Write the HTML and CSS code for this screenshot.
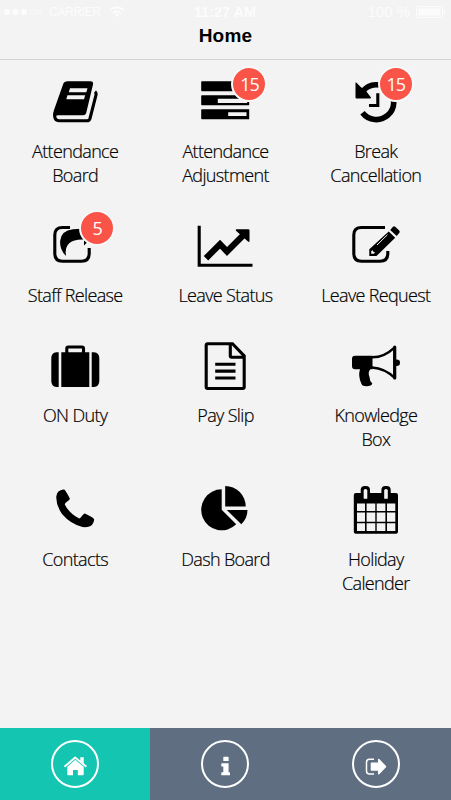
FILE: index.html
```
<!DOCTYPE html>
<html lang="en">
  <head>
    <meta charset="UTF-8" />
    <meta name="viewport" content="width=device-width, initial-scale=1.0" />
    <title>Home</title>
    <link rel="stylesheet" href="styles.css">
  </head>
  <body>
    <header class="header">
      <div class="status-bar">
        <div class="carrier">
          <svg width="38" height="10" viewBox="0 0 38 10">
            <circle cx="4" cy="5" r="3" fill="currentColor" />
            <circle cx="12.5" cy="5" r="3" fill="currentColor" />
            <circle cx="21" cy="5" r="3" fill="currentColor" />
            <circle cx="29.5" cy="5" r="2.5" fill="none" stroke="currentColor" stroke-width="0.5" />
            <circle cx="36" cy="5" r="1.7" fill="none" stroke="currentColor" stroke-width="0.5" />
          </svg>
          <span class="carrier-name">CARRIER</span>
          <svg width="16" height="12" viewBox="0 0 16 12" fill="none" stroke="currentColor" stroke-width="2">
            <path d="M1 4Q8-1 15 4M4 7Q8 4 12 7" />
            <circle cx="8" cy="9" r="0.8" />
          </svg>
        </div>
        <span class="time">11:27 AM</span>
        <div class="battery">
          <span>100 %</span>
          <svg width="31" height="12" viewBox="0 0 31 12">
            <rect x="0.5" y="0.5" width="26" height="11" rx="1.5" fill="none" stroke="currentColor" />
            <rect x="2.5" y="2.5" width="22" height="7" fill="currentColor" />
            <path d="M28.5 4v4" stroke="currentColor" stroke-width="1.5" />
          </svg>
        </div>
      </div>
      <h1>Home</h1>
    </header>

    <main class="menu">
      <a class="tile">
        <div class="icon">
          <svg viewBox="0 0 60 60">
            <path fill-rule="evenodd" d="M22.5 10.3H45.5Q48.6 10.4 48 13.5L41.2 42Q40.6 44.3 38 44.3H13Q10.5 44.3 10 46L8.3 44.5Q8 42 9 39L18.2 13Q19.2 10.3 22.5 10.3ZM25 17.3L23.8 21.3H41.3L42.5 17.3ZM22.5 24.2L21.3 28.2H39L40.2 24.2Z" />
            <path class="line" d="M9.8 42Q8.8 49.8 14 49.8H42Q44.3 49.8 45 47.5L50.9 24.5Q51.5 21.8 50 20.6" />
          </svg>
        </div>
        <span class="label">Attendance<br>Board</span>
      </a>
      <a class="tile">
        <div class="icon">
          <svg viewBox="0 0 60 60">
            <path fill-rule="evenodd" d="M7 10.3H54.2V20.3H7Q6.2 20.3 6.2 19.5V11Q6.2 10.3 7 10.3ZM7 24.3H54.2V34.3H7Q6.2 34.3 6.2 33.5V25Q6.2 24.3 7 24.3ZM7 38.3H54.2V48.3H7Q6.2 48.3 6.2 47.5V39Q6.2 38.3 7 38.3ZM22.8 27.7V32H52.2V27.7ZM33.2 41.3V45H51.5V41.3Z" />
          </svg>
          <span class="badge">15</span>
        </div>
        <span class="label">Attendance<br>Adjustment</span>
      </a>
      <a class="tile">
        <div class="icon icon-history">
          <svg viewBox="0 0 60 60">
            <path d="M16.5 41.7A17.4 17.4 0 1 0 17 20" fill="none" stroke="#000" stroke-width="5.6" />
            <path d="M10.2 11.5L14.5 15.8L20 20L25 26.5Q25 27.5 24 27.5H10.5Q9.5 27.5 9.5 26.5V12Q9.7 11 10.2 11.5Z" />
            <path class="line" d="M31.8 22.3V34.5H23" />
          </svg>
          <span class="badge">15</span>
        </div>
        <span class="label">Break<br>Cancellation</span>
      </a>

      <a class="tile">
        <div class="icon icon-release">
          <svg viewBox="0 0 60 60">
            <path class="line" d="M25 12.5H17.5Q9.8 12.5 9.8 20V38.5Q9.8 46.2 17.5 46.2H36.5Q44.2 46.2 44.2 38.5V33" />
            <path d="M21 41Q14.5 34.5 15.1 26Q16 15.5 28 14.2Q33 13.6 39 13.8V8L50 19.5L39 30.5V24.5Q29 24 24.5 28Q19.5 32 21 41Z" />
          </svg>
          <span class="badge">5</span>
        </div>
        <span class="label">Staff Release</span>
      </a>
      <a class="tile">
        <div class="icon">
          <svg viewBox="0 0 60 60">
            <path class="line" d="M4.2 10.7V50.2H57.5" />
            <path d="M11 43.2L25 29.2L32 36.5L49.5 19" fill="none" stroke="#000" stroke-width="6.2" />
            <path d="M41.5 14.3H53.5Q54.5 14.3 54.5 15.3V26Q54.3 27.7 53 26.5L41 15.8Q40.2 14.5 41.5 14.3Z" />
          </svg>
        </div>
        <span class="label">Leave Status</span>
      </a>
      <a class="tile">
        <div class="icon">
          <svg viewBox="0 0 60 60">
            <path class="line" d="M39 12.5H15.5Q7.8 12.5 7.8 20V38.5Q7.8 46.2 15.5 46.2H34Q41.8 46.2 41.8 38.5V36" />
            <path fill-rule="evenodd" d="M42.7 16.4L49.2 22.8L30.5 41H23.3V34.3ZM26.3 35L25.2 36.5V38.8H27.8L29.1 37.4L27.4 36.8Z" />
            <path d="M44.2 14.9L47 11.7Q48 10.8 49.2 11.7L53.2 15.4Q54.3 16.6 53.4 17.7L50.7 21.1Z" />
            <path d="M31 30L41.4 19.8" stroke="#f3f3f3" stroke-width="1" />
          </svg>
        </div>
        <span class="label">Leave Request</span>
      </a>

      <a class="tile">
        <div class="icon">
          <svg viewBox="0 0 60 60">
            <path d="M13.7 17.3V52H11.5Q6.3 51.5 6.3 46V23Q6.3 17.8 11.5 17.3ZM16.3 17.3H44.3V52H16.3ZM46.7 17.3H49Q54.3 17.8 54.3 23V46Q54.3 51.5 49 52H46.7Z" />
            <path class="line" d="M21.8 18V13.5Q21.8 12 23.3 12H37Q38.5 12 38.5 13.5V18" />
          </svg>
        </div>
        <span class="label">ON Duty</span>
      </a>
      <a class="tile">
        <div class="icon">
          <svg viewBox="0 0 60 60">
            <path class="line" d="M37.5 8.7H12.7Q11.2 8.7 11.2 10.2V52Q11.2 53.5 12.7 53.5H47.7Q49.2 53.5 49.2 52V20.8ZM35.3 9V20.8Q35.3 22.3 36.8 22.3H49M20.2 29.3H40.5M20.2 36.1H40.5M20.2 43H40.5" />
          </svg>
        </div>
        <span class="label">Pay Slip</span>
      </a>
      <a class="tile">
        <div class="icon">
          <svg viewBox="0 0 60 60">
            <path d="M9 20.7H26.5V34.2H24.5Q21.5 37 23.5 42Q23.5 46 26.3 48.5Q25.5 51.3 20.5 51.2Q16.3 51.2 15.5 49Q11.8 41 14 34.2H9Q6 34.2 6 31V24Q6 20.7 9 20.7Z" />
            <path d="M26 22.3Q38 22.5 48.7 12.3V43Q39 33.3 26 32.5" fill="none" stroke="#000" stroke-width="2.4" stroke-linejoin="round" />
            <path d="M48.7 12V43" stroke="#000" stroke-width="3.2" stroke-linecap="round" />
            <circle cx="50.7" cy="27.7" r="3.3" />
          </svg>
        </div>
        <span class="label">Knowledge<br>Box</span>
      </a>

      <a class="tile">
        <div class="icon">
          <svg viewBox="0 0 60 60">
            <path d="M13.7 12.2Q17.5 10 19.2 10.6Q20.4 11 24.8 19.6Q25 20.7 22.2 22.6Q19.4 24.3 19.9 25.7Q24.5 34.5 33.8 39.3Q35.2 39.8 36.9 37Q38.8 34.2 39.9 34.5Q48.8 38.9 49 40.2Q49.5 42 47.3 45.5Q44.5 48.7 37.5 48Q25.5 45 17 35Q10.8 25.8 11.3 17.5Q11.8 13.4 13.7 12.2Z" />
          </svg>
        </div>
        <span class="label">Contacts</span>
      </a>
      <a class="tile">
        <div class="icon">
          <svg viewBox="0 0 60 60">
            <path d="M26.7 10.3V30.8L41.2 45.3A20.5 20.5 0 1 1 26.7 10.3Z" />
            <path d="M30.2 7A20.5 20.5 0 0 1 50.7 27.6H30.2Z" />
            <path d="M31.8 31H52.5A20.5 20.5 0 0 1 46.3 45.3Z" />
          </svg>
        </div>
        <span class="label">Dash Board</span>
      </a>
      <a class="tile">
        <div class="icon">
          <svg viewBox="0 0 60 60">
            <rect x="7.8" y="14" width="44.2" height="40.7" rx="2" />
            <rect x="14.7" y="7" width="9.3" height="15" rx="4" />
            <rect x="35.4" y="7" width="9.3" height="15" rx="4" />
            <path class="cells" d="M17.7 11Q19.5 8.8 21.3 11V19.8H17.7ZM38.2 11Q40 8.8 41.8 11V19.8H38.2ZM11 24.5h8v7.6h-8zM20.6 24.5h8.7v7.6h-8.7zM30.7 24.5h8.7v7.6h-8.7zM41 24.5h8.3v7.6h-8.3zM11 33.4h8v9.3h-8zM20.6 33.4h8.7v9.3h-8.7zM30.7 33.4h8.7v9.3h-8.7zM41 33.4h8.3v9.3h-8.3zM11 44.2h8v7.8h-8zM20.6 44.2h8.7v7.8h-8.7zM30.7 44.2h8.7v7.8h-8.7zM41 44.2h8.3v7.8h-8.3z" />
          </svg>
        </div>
        <span class="label">Holiday<br>Calender</span>
      </a>
    </main>

    <nav class="tab-bar">
      <a class="tab active">
        <svg viewBox="0 0 48 48">
          <circle class="ring" cx="24" cy="24" r="23" />
          <path d="M24.3 19.8L32.7 26.8V34.3Q32.7 35.3 31.7 35.3H26.8V30H22V35.3H17.3Q16.3 35.3 16.3 34.3V26.8Z" />
          <path d="M24.3 16.4L29.3 20.4V17.3H32.7V23.3L36 26L34.8 27.5L24.3 18.8L14 27.5L12.8 26L23 17.3Q24.3 16.2 24.3 16.4Z" />
        </svg>
      </a>
      <a class="tab">
        <svg viewBox="0 0 48 48">
          <circle class="ring" cx="24" cy="24" r="23" />
          <path d="M22.3 17.2Q22.3 16.7 22.8 16.7H27Q27.6 16.7 27.6 17.2V21H22.3ZM20.8 23.3H27.6V32.2H28.5Q29 32.2 29 32.7V34.8Q29 35.3 28.5 35.3H20.8Q20.3 35.3 20.3 34.8V32.7Q20.3 32.2 20.8 32.2H22.3V26.4H20.8Q20.3 26.4 20.3 25.9V23.8Q20.3 23.3 20.8 23.3Z" />
        </svg>
      </a>
      <a class="tab">
        <svg viewBox="0 0 48 48">
          <circle class="ring" cx="24" cy="24" r="23" />
          <path d="M22 19.2H17.5Q14.5 19.2 14.5 22.2V31Q14.5 34 17.5 34H22" fill="none" stroke="#fff" stroke-width="1.5" />
          <path d="M18.7 23.2Q18.7 22.4 19.5 22.4H26V19.3Q26.3 18.2 27.3 19L34 26Q34.4 26.6 34 27.3L27.3 34.3Q26.3 35 26 34V30.8H19.5Q18.7 30.8 18.7 30Z" />
        </svg>
      </a>
    </nav>
  </body>
</html>
```
FILE: styles.css
```
/* General reset */
* {
  margin: 0;
  padding: 0;
  box-sizing: border-box;
}

body {
  display: flex;
  flex-direction: column;
  height: 100vh;
  background: #f3f3f3;
  color: #000;
  font-family: "Open Sans", "Noto Sans", sans-serif;
}

svg {
  display: block;
}

/* Header */
.header {
  height: 60px;
  border-bottom: 1px solid #d2d2d2;
  font-family: "Liberation Sans", Arial, sans-serif;
}

.header h1 {
  font-size: 19px;
  line-height: 24px;
  letter-spacing: 0.2px;
  text-align: center;
}

.status-bar {
  display: grid;
  grid-template-columns: 1fr auto 1fr;
  align-items: center;
  height: 24px;
  padding: 0 4px 0 3px;
  color: #fcfcfc;
  font-size: 15px;
}

.carrier,
.battery {
  display: flex;
  align-items: center;
}

.carrier {
  gap: 8px;
}

.carrier-name {
  width: 52px;
  font-size: 12px;
  letter-spacing: -0.3px;
  white-space: nowrap;
}

.battery {
  justify-content: flex-end;
  gap: 6px;
  line-height: 22px;
}

.time {
  font-weight: bold;
  font-size: 14.5px;
}

/* Menu grid */
.menu {
  flex: 1;
  display: grid;
  grid-template-columns: repeat(3, 1fr);
  align-content: start;
  row-gap: 28px;
  padding-top: 11px;
}

.tile {
  display: flex;
  flex-direction: column;
  align-items: center;
  gap: 8px;
}

.icon {
  position: relative;
  width: 60px;
  height: 60px;
}

.line {
  fill: none;
  stroke: #000;
  stroke-width: 3.1;
}

.cells {
  fill: #f3f3f3;
}

.label {
  font-size: 18px;
  font-weight: 300;
  line-height: 24px;
  letter-spacing: -0.65px;
  text-align: center;
  white-space: nowrap;
  -webkit-text-stroke: 0.2px #000;
}

/* Notification count over the icon */
.badge {
  position: absolute;
  top: -5px;
  left: 36px;
  width: 36px;
  height: 36px;
  border: 2px solid #f8f8f8;
  border-radius: 50%;
  background: #fa5448;
  color: #fff;
  font-size: 18px;
  line-height: 32px;
  letter-spacing: -1px;
  text-align: center;
}

.icon-history .badge {
  left: 32px;
}

.icon-release .badge {
  left: 34px;
}

/* Bottom tabs */
.tab-bar {
  display: grid;
  grid-template-columns: repeat(3, 1fr);
  height: 72px;
  background: #5f6e81;
}

.tab {
  display: flex;
  align-items: center;
  justify-content: center;
}

.tab svg {
  width: 48px;
  height: 48px;
  fill: #fff;
}

.tab .ring {
  fill: none;
  stroke: #fff;
  stroke-width: 2;
}

.tab.active {
  background: #14c5b2;
}
```
